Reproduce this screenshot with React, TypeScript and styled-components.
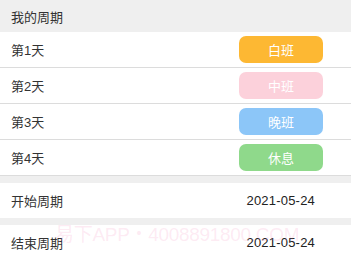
import React from "react";
import styled, { createGlobalStyle } from "styled-components";

const Global = createGlobalStyle`
  html, body { margin: 0; padding: 0; background: #ffffff; }
  body { font-family: "Liberation Sans", "Noto Sans CJK SC", sans-serif; color: #333; }
`;

const Page = styled.div`
  width: 351px;
  position: relative;
  background: #efefef;
  overflow: hidden;
`;

const Header = styled.div`
  height: 32px;
  display: flex;
  align-items: center;
  padding-left: 11px;
  font-size: 13px;
  color: #333;
  background: #efefef;
`;

const Row = styled.div<{ $gapTop?: boolean; $border?: boolean }>`
  height: 35px;
  display: flex;
  align-items: center;
  justify-content: space-between;
  padding: 0 28px 0 11px;
  background: #fff;
  border-bottom: ${(p) => (p.$border ? "1px solid #dcdcdc" : "none")};
  margin-top: ${(p) => (p.$gapTop ? "7px" : "0")};
  font-size: 13px;
`;

const Label = styled.span`
  color: #333;
`;

const Shift = styled.div<{ $bg: string }>`
  width: 84px;
  height: 27px;
  border-radius: 7px;
  background: ${(p) => p.$bg};
  color: #fff;
  font-size: 13px;
  display: flex;
  align-items: center;
  justify-content: center;
`;

const DateText = styled.span`
  color: #222;
  font-size: 13px;
  margin-right: 8px;
  letter-spacing: 0.2px;
`;

const Watermark = styled.div`
  position: absolute;
  left: 55px;
  top: 224px;
  font-size: 19px;
  line-height: 22px;
  letter-spacing: -0.3px;
  color: rgba(245, 150, 195, 0.2);
  white-space: nowrap;
  pointer-events: none;
`;

const days = [
  { label: "第1天", shift: "白班", bg: "#fdb833" },
  { label: "第2天", shift: "中班", bg: "#fcd1db" },
  { label: "第3天", shift: "晚班", bg: "#8cc6f8" },
  { label: "第4天", shift: "休息", bg: "#8fd98b" },
];

export default function App() {
  return (
    <Page>
      <Global />
      <Header>我的周期</Header>
      {days.map((d) => (
        <Row key={d.label} $border>
          <Label>{d.label}</Label>
          <Shift $bg={d.bg}>{d.shift}</Shift>
        </Row>
      ))}
      <Row $gapTop>
        <Label>开始周期</Label>
        <DateText>2021-05-24</DateText>
      </Row>
      <Row $gapTop>
        <Label>结束周期</Label>
        <DateText>2021-05-24</DateText>
      </Row>
      <Watermark>易下APP・4008891800.COM</Watermark>
    </Page>
  );
}
